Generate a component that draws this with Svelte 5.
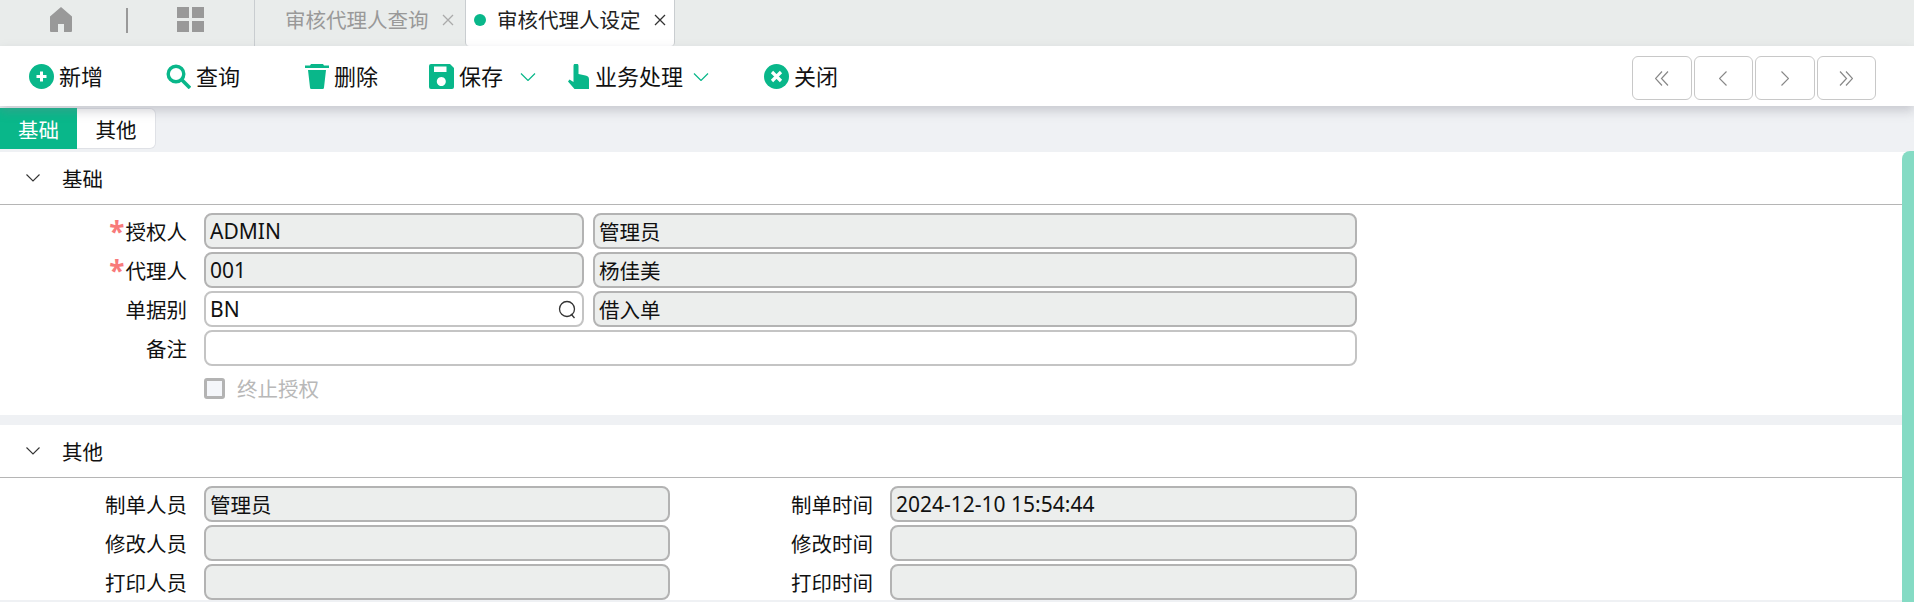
<script>
  const tools = [
    { id: 'add', label: '新增' },
    { id: 'search', label: '查询' },
    { id: 'trash', label: '删除' },
    { id: 'save', label: '保存', caret: true },
    { id: 'hand', label: '业务处理', caret: true },
    { id: 'close', label: '关闭' }
  ];

  const mainRows = [
    { label: '授权人', required: true, code: 'ADMIN', name: '管理员', codeLocked: true },
    { label: '代理人', required: true, code: '001', name: '杨佳美', codeLocked: true },
    { label: '单据别', code: 'BN', name: '借入单', lookup: true }
  ];

  const otherRows = [
    { left: '制单人员', leftValue: '管理员', right: '制单时间', rightValue: '2024-12-10 15:54:44' },
    { left: '修改人员', leftValue: '', right: '修改时间', rightValue: '' },
    { left: '打印人员', leftValue: '', right: '打印时间', rightValue: '' }
  ];
</script>

<div class="page">
  <div class="tabbar">
    <svg class="home" viewBox="0 0 24 25" width="24" height="25">
      <path d="M12 0L23 9.500V24a1 1 0 0 1-1 1H15V17H9V25H2a1 1 0 0 1-1-1V9.500Z" fill="#999" />
    </svg>
    <span class="divider"></span>
    <svg class="grid-icon" viewBox="0 0 27 25" width="27" height="25">
      <rect x="0" y="0" width="12" height="11" fill="#999" />
      <rect x="15" y="0" width="12" height="11" fill="#999" />
      <rect x="0" y="14" width="12" height="11" fill="#999" />
      <rect x="15" y="14" width="12" height="11" fill="#999" />
    </svg>
    <div class="tab">
      <span class="tab-text">审核代理人查询</span>
      <svg class="tab-x" viewBox="0 0 12 12" width="12" height="12"><path d="M1 1l10 10M11 1L1 11" stroke="#aaa" stroke-width="1.300" /></svg>
    </div>
    <div class="tab active">
      <span class="dot"></span>
      <span class="tab-text">审核代理人设定</span>
      <svg class="tab-x" viewBox="0 0 12 12" width="12" height="12"><path d="M1 1l10 10M11 1L1 11" stroke="#333" stroke-width="1.300" /></svg>
    </div>
  </div>

  <div class="toolbar">
    <div class="tools">
      {#each tools as t}
        <div class="tool {t.id}">
          {#if t.id === 'add'}
            <svg viewBox="0 0 25 25" width="25" height="25">
              <circle cx="12.5" cy="12.5" r="12.5" fill="#09b78a" />
              <path d="M12.5 7.5v10M7.5 12.5h10" stroke="#fff" stroke-width="3" />
            </svg>
          {:else if t.id === 'search'}
            <svg viewBox="0 0 25 25" width="25" height="25">
              <circle cx="10" cy="10" r="7.8" fill="none" stroke="#09b78a" stroke-width="3.4" />
              <path d="M15.5 15.5 L24 24" stroke="#09b78a" stroke-width="3.6" />
            </svg>
          {:else if t.id === 'trash'}
            <svg viewBox="0 0 24 25" width="24" height="25">
              <path d="M6 0h12l1 1.500h5v2.500H0V1.500h5z M3 6h18l-2 17.500a1.500 1.500 0 0 1-1.500 1.500H6.500A1.500 1.500 0 0 1 5 23.500z" fill="#09b78a" />
            </svg>
          {:else if t.id === 'save'}
            <svg viewBox="0 0 25 25" width="25" height="25">
              <path fill-rule="evenodd" d="M2 0H21L25 4V23a2 2 0 0 1-2 2H2a2 2 0 0 1-2-2V2a2 2 0 0 1 2-2Z M5 2.500V8H17.500V2.500Z M12.300 13a4.500 4.500 0 1 0 .01 0Z" fill="#09b78a" />
            </svg>
          {:else if t.id === 'hand'}
            <svg viewBox="0 0 21 25" width="21" height="25">
              <path d="M5.500 2a2.500 2.500 0 0 1 5 0V10l7 1.500a4 4 0 0 1 3.500 4V25H6.500L0 17.500l1.500-2 4 2.500Z" fill="#09b78a" />
            </svg>
          {:else}
            <svg viewBox="0 0 25 25" width="25" height="25">
              <circle cx="12.5" cy="12.5" r="12.5" fill="#09b78a" />
              <path d="M8 8l9 9M17 8l-9 9" stroke="#fff" stroke-width="3.2" />
            </svg>
          {/if}
          <span class="tool-label">{t.label}</span>
          {#if t.caret}
            <svg class="caret" viewBox="0 0 16 8" width="16" height="8">
              <path d="M1 .5l7 7 7-7" fill="none" stroke="#09b78a" stroke-width="1.2" />
            </svg>
          {/if}
        </div>
      {/each}
    </div>
    <div class="pager">
      <button aria-label="first">
        <svg viewBox="0 0 14 15" width="14" height="15"><path d="M7 .5L.5 7.500 7 14.500M13 .5L6.500 7.500 13 14.500" fill="none" stroke="#888" stroke-width="1.200" /></svg>
      </button>
      <button aria-label="previous">
        <svg viewBox="0 0 8 15" width="8" height="15"><path d="M7.500 .5L.5 7.500l7 7" fill="none" stroke="#888" stroke-width="1.200" /></svg>
      </button>
      <button aria-label="next">
        <svg viewBox="0 0 8 15" width="8" height="15"><path d="M.5 .5l7 7-7 7" fill="none" stroke="#888" stroke-width="1.200" /></svg>
      </button>
      <button aria-label="last">
        <svg viewBox="0 0 14 15" width="14" height="15"><path d="M1 .5l6.500 7L1 14.500M7 .5l6.500 7L7 14.500" fill="none" stroke="#888" stroke-width="1.200" /></svg>
      </button>
    </div>
  </div>

  <div class="subtabs">
    <div class="subtab on">基础</div>
    <div class="subtab">其他</div>
  </div>

  <section class="panel first">
    <div class="panel-head">
      <svg viewBox="0 0 14 8" width="14" height="8"><path d="M.5 .5L7 7l6.500-6.500" fill="none" stroke="#333" stroke-width="1.100" /></svg>
      <span>基础</span>
    </div>
    <div class="form main">
      {#each mainRows as r}
        <div class="label">{#if r.required}<i>*</i>{/if}{r.label}</div>
        <div class="field latin" class:locked={r.codeLocked}>
          {r.code}
          {#if r.lookup}
            <svg class="lookup" viewBox="0 0 18 19" width="18" height="19">
              <circle cx="9" cy="9" r="7.500" fill="none" stroke="#333" stroke-width="1.300" />
              <path d="M13 14l3.500 4" stroke="#333" stroke-width="1.300" />
            </svg>
          {/if}
        </div>
        <div class="field locked">{r.name}</div>
      {/each}
      <div class="label">备注</div>
      <div class="field wide"></div>
      <div class="check-row">
        <span class="check"></span>
        <span>终止授权</span>
      </div>
    </div>
  </section>

  <section class="panel">
    <div class="panel-head">
      <svg viewBox="0 0 14 8" width="14" height="8"><path d="M.5 .5L7 7l6.500-6.500" fill="none" stroke="#333" stroke-width="1.100" /></svg>
      <span>其他</span>
    </div>
    <div class="form other">
      {#each otherRows as r}
        <div class="label">{r.left}</div>
        <div class="field locked">{r.leftValue}</div>
        <div class="label">{r.right}</div>
        <div class="field locked latin">{r.rightValue}</div>
      {/each}
    </div>
  </section>

  <div class="scrollbar"></div>
</div>

<style>
  :global(body) {
    margin: 0;
    background: #fff;
  }

  .page {
    position: relative;
    width: 1914px;
    height: 602px;
    overflow: hidden;
    background: #eff1f4;
    font-family: "Noto Sans", "Noto Sans CJK SC", sans-serif;
    font-size: 20.5px;
    color: #111;
  }

  .tabbar {
    display: flex;
    align-items: flex-start;
    height: 46px;
    background: #e9eceb;
  }

  .home {
    margin: 7px 0 0 49px;
  }

  .divider {
    width: 2px;
    height: 25px;
    margin: 8px 0 0 53px;
    background: #999;
  }

  .grid-icon {
    margin: 7px 0 0 49px;
  }

  .tab {
    display: flex;
    align-items: center;
    height: 46px;
    width: 211px;
    margin-left: 50px;
    padding-left: 30px;
    box-sizing: border-box;
    border-left: 1px solid #c9cdd0;
    color: #999;
  }

  .tab-text {
    line-height: 40px;
    margin-top: -6px;
    white-space: nowrap;
  }

  .tab-x {
    margin: -6px 0 0 13px;
  }

  .tab.active {
    width: 210px;
    margin-left: 0;
    padding-left: 8px;
    background: #fff;
    color: #222;
    border-left: 1px solid #c9cdd0;
    border-right: 1px solid #c9cdd0;
    border-radius: 0 0 4px 4px;
  }

  .dot {
    width: 12px;
    height: 12px;
    margin: -6px 11px 0 0;
    border-radius: 50%;
    background: #09b78a;
  }

  .toolbar {
    display: flex;
    justify-content: space-between;
    align-items: center;
    height: 60px;
    padding: 0 38px 0 29px;
    background: #fff;
    box-shadow: 0 5px 10px rgba(130, 130, 140, 0.35);
    position: relative;
    box-sizing: border-box;
  }

  .tools {
    display: grid;
    grid-template-columns: 137px 139px 124px 139px 196px auto;
  }

  .tool {
    display: flex;
    align-items: center;
    gap: 5px;
    font-size: 22px;
    line-height: 30px;
    color: #111;
  }

  .tool svg {
    flex: none;
  }

  .tool .caret {
    margin: 2px 0 0 12px;
  }

  .tool.hand {
    gap: 6px;
  }

  .tool.hand .caret {
    margin-left: 4px;
  }

  .pager {
    display: flex;
    gap: 2px;
    margin-top: 4px;
  }

  .pager button {
    display: flex;
    align-items: center;
    justify-content: center;
    width: 59.5px;
    height: 44px;
    padding: 0;
    background: #fff;
    border: 1px solid #c8c8c8;
    border-radius: 6px;
  }

  .subtabs {
    display: flex;
    height: 44px;
    padding-top: 2px;
    box-sizing: border-box;
  }

  .subtab {
    display: flex;
    align-items: center;
    justify-content: center;
    width: 79px;
    height: 41px;
    box-sizing: border-box;
    background: #fff;
    border: 1px solid #dfe1e6;
    border-left: none;
    border-radius: 0 6px 6px 0;
  }

  .subtab.on {
    width: 77px;
    background: #09b78a;
    color: #fff;
    border: none;
    border-radius: 0;
  }

  .panel {
    margin-top: 10px;
    background: #fff;
  }

  .panel.first {
    margin-top: 2px;
    height: 263px;
  }

  .panel-head {
    display: flex;
    align-items: center;
    height: 53px;
    box-sizing: border-box;
    border-bottom: 1px solid #b5b5b5;
    padding-left: 26px;
  }

  .panel-head span {
    margin-left: 22px;
  }

  .form {
    display: grid;
    gap: 3px 0;
    padding-top: 8px;
    grid-auto-rows: 36px;
    width: 1357px;
  }

  .form.main {
    grid-template-columns: 187px 397px 1fr;
  }

  .form.other {
    grid-template-columns: 187px 483px 203px 1fr;
  }

  .label {
    display: flex;
    align-items: center;
    justify-content: flex-end;
    white-space: nowrap;
  }

  .label i {
    color: #f87a7a;
    font-style: normal;
    font-weight: 700;
    font-size: 28px;
    line-height: 20px;
    margin: -1px 1px 0 0;
  }

  .field {
    position: relative;
    box-sizing: border-box;
    height: 36px;
    margin-left: 17px;
    padding: 0 4px;
    display: flex;
    align-items: center;
    background: #fff;
    border: 2px solid #c4c4c4;
    border-radius: 8px;
    white-space: nowrap;
  }

  .field.latin {
    font-size: 21px;
  }

  .field.locked {
    background: #eceeed;
    border-color: #b3b3b3;
  }

  .form.main .field + .field {
    margin-left: 9px;
  }

  .field.wide {
    grid-column: 2 / 4;
  }

  .lookup {
    position: absolute;
    right: 6px;
    top: 7px;
  }

  .check-row {
    grid-column: 2 / 4;
    display: flex;
    align-items: center;
    margin: 2px 0 0 17px;
    color: #b8b8b8;
  }

  .check {
    width: 21px;
    height: 21px;
    box-sizing: border-box;
    margin-right: 12px;
    background: #f4f6fa;
    border: 3px solid #b3b3b3;
    border-radius: 3px;
  }

  .scrollbar {
    position: absolute;
    top: 151px;
    right: 0;
    bottom: 0;
    width: 12px;
    background: #85dbc4;
    border-radius: 8px 0 0 0;
  }
</style>
